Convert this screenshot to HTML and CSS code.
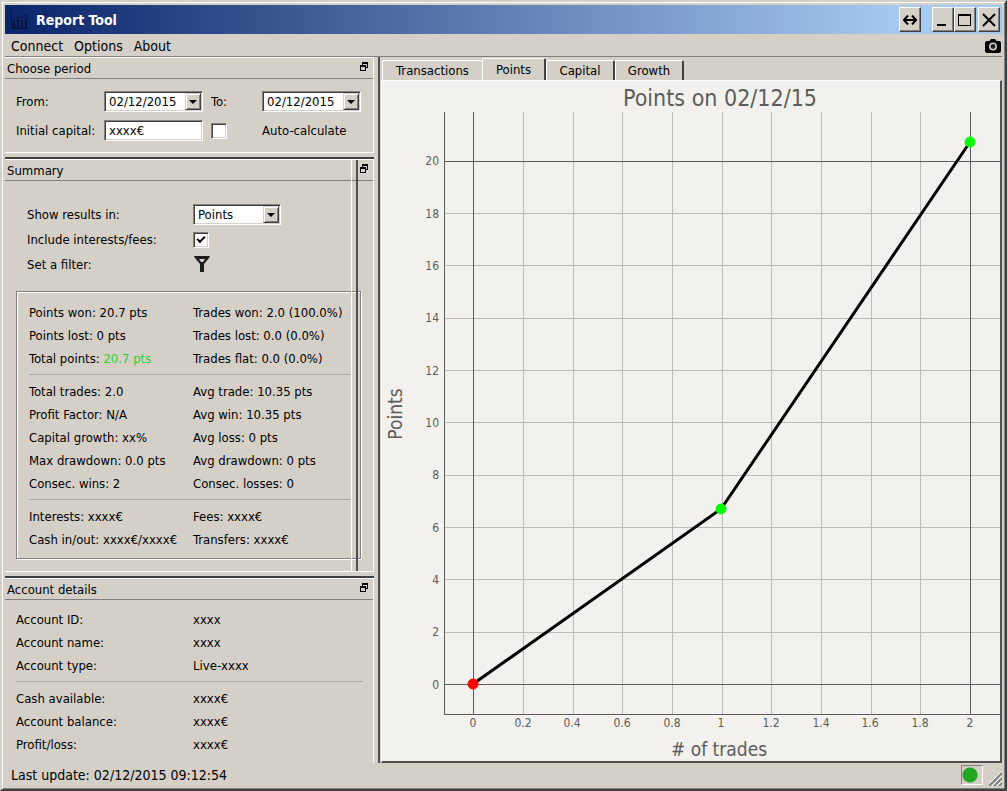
FILE: index.html
```html
<!DOCTYPE html>
<html lang="en">
<head>
  <meta charset="UTF-8" />
  <meta name="viewport" content="width=device-width, initial-scale=1.0" />
  <link rel="stylesheet" href="styles.css">
  <title>Report Tool</title>
</head>
<body>
  <div class="window">
    <!-- Title bar -->
    <header class="title-bar">
      <svg class="app-icon" width="20" height="20" viewBox="0 0 20 20" fill="none" stroke="#06133f">
        <path d="M1.500 0v18.500h18" />
        <path d="M3 12h2v6H3zM7 9h2v9H7zM11 10h2v8h-2zM15 8h2v10h-2z" fill="#06133f" stroke="none" />
        <path d="M3 11l4-4 4 1 5-3 2 2" />
      </svg>
      <h1>Report Tool</h1>
      <button class="win-btn resize-btn" aria-label="Resize">
        <svg width="14" height="10" viewBox="0 0 14 10" fill="none" stroke="#000" stroke-width="2">
          <path d="M5 0.500L1 5l4 4.500M9 0.500L13 5L9 9.500M2 5h10" />
        </svg>
      </button>
      <button class="win-btn" aria-label="Minimize">
        <svg width="14" height="14" viewBox="0 0 14 14"><path d="M1 11h9v2H1z" /></svg>
      </button>
      <button class="win-btn" aria-label="Maximize">
        <svg width="14" height="14" viewBox="0 0 14 14"><path d="M0 1h13v12H0zM1 3v9h11V3z" fill-rule="evenodd" /></svg>
      </button>
      <button class="win-btn close-btn" aria-label="Close">
        <svg width="14" height="14" viewBox="0 0 14 14" stroke="#000" stroke-width="2"><path d="M1 1l12 12M13 1L1 13" /></svg>
      </button>
    </header>

    <!-- Menu -->
    <nav class="menu-bar">
      <a href="#">Connect</a>
      <a href="#">Options</a>
      <a href="#">About</a>
      <button class="camera-btn" aria-label="Take a screenshot">
        <svg width="16" height="14" viewBox="0 0 16 14">
          <path d="M2 2h2.500L6 0h4l1.500 2H14q2 0 2 2v8q0 2-2 2H2q-2 0-2-2V4q0-2 2-2z" />
          <circle cx="8" cy="7.500" r="3.200" fill="#222" stroke="#d4d0c8" stroke-width="1.500" />
        </svg>
      </button>
    </nav>

    <main class="content">
      <!-- Docks -->
      <div class="docks">
        <section class="dock">
          <div class="dock-title">
            <h2>Choose period</h2>
            <button class="float-btn" aria-label="Float">
              <svg width="8" height="9" viewBox="0 0 8 9"><path d="M2 0h6v6H6V5h1V2H3v1H2zM0 3h6v6H0zM1 5v3h4V5z" fill-rule="evenodd" /></svg>
            </button>
          </div>
          <div class="period">
            <label for="from">From:</label>
            <div class="combo">
              <input type="text" id="from" value="02/12/2015">
              <button class="arrow" aria-label="Open calendar"></button>
            </div>
            <label for="to">To:</label>
            <div class="combo">
              <input type="text" id="to" value="02/12/2015">
              <button class="arrow" aria-label="Open calendar"></button>
            </div>
            <label for="capital">Initial capital:</label>
            <input type="text" class="text-box" id="capital" value="xxxx€">
            <input type="checkbox" id="auto">
            <label for="auto">Auto-calculate</label>
          </div>
        </section>

        <div class="splitter"></div>

        <section class="dock summary">
          <div class="dock-title">
            <h2>Summary</h2>
            <button class="float-btn" aria-label="Float">
              <svg width="8" height="9" viewBox="0 0 8 9"><path d="M2 0h6v6H6V5h1V2H3v1H2zM0 3h6v6H0zM1 5v3h4V5z" fill-rule="evenodd" /></svg>
            </button>
          </div>
          <div class="options">
            <label for="results">Show results in:</label>
            <div class="combo combo-small">
              <select id="results">
                <option>Points</option>
                <option>Euros</option>
                <option>Percent</option>
              </select>
              <span class="arrow"></span>
            </div>
            <label for="fees">Include interests/fees:</label>
            <input type="checkbox" id="fees" checked>
            <label for="filter">Set a filter:</label>
            <button class="filter-btn" id="filter">
              <svg width="17" height="16" viewBox="0 0 17 16">
                <path d="M1 0h16l-1 2-5 6v8H7V8L2 2zM6 3l2 3h2l2-3z" fill="#1c1c1c" fill-rule="evenodd" />
              </svg>
            </button>
          </div>
          <div class="stats">
            <table>
              <tr><td>Points won: 20.7 pts</td><td>Trades won: 2.0 (100.0%)</td></tr>
              <tr><td>Points lost: 0 pts</td><td>Trades lost: 0.0 (0.0%)</td></tr>
              <tr><td>Total points: <span class="gain">20.7 pts</span></td><td>Trades flat: 0.0 (0.0%)</td></tr>
            </table>
            <hr>
            <table>
              <tr><td>Total trades: 2.0</td><td>Avg trade: 10.35 pts</td></tr>
              <tr><td>Profit Factor: N/A</td><td>Avg win: 10.35 pts</td></tr>
              <tr><td>Capital growth: xx%</td><td>Avg loss: 0 pts</td></tr>
              <tr><td>Max drawdown: 0.0 pts</td><td>Avg drawdown: 0 pts</td></tr>
              <tr><td>Consec. wins: 2</td><td>Consec. losses: 0</td></tr>
            </table>
            <hr>
            <table>
              <tr><td>Interests: xxxx€</td><td>Fees: xxxx€</td></tr>
              <tr><td>Cash in/out: xxxx€/xxxx€</td><td>Transfers: xxxx€</td></tr>
            </table>
          </div>
        </section>

        <div class="splitter"></div>

        <section class="dock account">
          <div class="dock-title">
            <h2>Account details</h2>
            <button class="float-btn" aria-label="Float">
              <svg width="8" height="9" viewBox="0 0 8 9"><path d="M2 0h6v6H6V5h1V2H3v1H2zM0 3h6v6H0zM1 5v3h4V5z" fill-rule="evenodd" /></svg>
            </button>
          </div>
          <div class="details">
            <table>
              <tr><td>Account ID:</td><td>xxxx</td></tr>
              <tr><td>Account name:</td><td>xxxx</td></tr>
              <tr><td>Account type:</td><td>Live-xxxx</td></tr>
            </table>
            <hr>
            <table>
              <tr><td>Cash available:</td><td>xxxx€</td></tr>
              <tr><td>Account balance:</td><td>xxxx€</td></tr>
              <tr><td>Profit/loss:</td><td>xxxx€</td></tr>
            </table>
          </div>
        </section>
      </div>

      <!-- Tabs and chart -->
      <div class="workspace">
        <div class="tabs" role="tablist">
          <button class="tab tab-wide" role="tab">Transactions</button>
          <button class="tab active" role="tab" aria-selected="true">Points</button>
          <button class="tab" role="tab">Capital</button>
          <button class="tab" role="tab">Growth</button>
        </div>
        <div class="panel">
          <svg class="chart" viewBox="0 0 618 680">
            <text class="chart-title" x="338" y="25">Points on 02/12/15</text>
            <!-- Grid -->
            <path class="grid" d="M141 31V633M191 31V633M240 31V633M290 31V633M340 31V633M389 31V633M439 31V633M489 31V633M538 31V633" />
            <path class="grid" d="M62 551H618M62 498H618M62 446H618M62 394H618M62 341H618M62 289H618M62 237H618M62 184H618M62 132H618" />
            <path class="axis" d="M62 31V633H618M91 31V633M588 31V633M62 603H618M62 80H618" />
            <!-- Y ticks -->
            <g class="tick tick-y">
              <text x="57" y="608">0</text>
              <text x="57" y="555">2</text>
              <text x="57" y="503">4</text>
              <text x="57" y="451">6</text>
              <text x="57" y="398">8</text>
              <text x="57" y="346">10</text>
              <text x="57" y="294">12</text>
              <text x="57" y="241">14</text>
              <text x="57" y="189">16</text>
              <text x="57" y="137">18</text>
              <text x="57" y="84">20</text>
            </g>
            <!-- X ticks -->
            <g class="tick tick-x">
              <text x="91" y="646">0</text>
              <text x="141" y="646">0.2</text>
              <text x="190" y="646">0.4</text>
              <text x="240" y="646">0.6</text>
              <text x="290" y="646">0.8</text>
              <text x="339" y="646">1</text>
              <text x="389" y="646">1.2</text>
              <text x="439" y="646">1.4</text>
              <text x="488" y="646">1.6</text>
              <text x="538" y="646">1.8</text>
              <text x="588" y="646">2</text>
            </g>
            <text class="axis-label" x="337" y="675"># of trades</text>
            <text class="axis-label" transform="translate(20 333) rotate(-90)">Points</text>
            <!-- Data -->
            <path class="curve" d="M91 603L339 428L588 61" />
            <circle cx="91" cy="603" r="5" fill="#f00" stroke="#f00" />
            <circle cx="339" cy="428" r="5" fill="#0f0" stroke="#0f0" />
            <circle cx="588" cy="61" r="5" fill="#0f0" stroke="#0f0" />
          </svg>
        </div>
      </div>
    </main>

    <!-- Status bar -->
    <footer class="status-bar">
      <span>Last update: 02/12/2015 09:12:54</span>
      <span class="status-light"></span>
      <svg class="grip" width="13" height="13" viewBox="0 0 13 13" stroke="#808080" stroke-width="2">
        <path d="M0 13L13 0M5 13L13 5M10 13l3-3" />
        <path d="M-1 12L12-1M3 13L13 3M8 13l5-5" stroke="#fff" stroke-width="1" />
      </svg>
    </footer>
  </div>
</body>
</html>
```
FILE: styles.css
```css
* {
  margin: 0;
  padding: 0;
  box-sizing: border-box;
}

body {
  font-family: "DejaVu Sans Condensed", "DejaVu Sans", sans-serif;
  font-size: 13px;
  color: #000;
  background: #d4d0c8;
}

button, input, select {
  font: inherit;
  color: inherit;
}

button {
  background: none;
  border: none;
}

svg {
  display: block;
}

/* Window frame */
.window {
  display: flex;
  flex-direction: column;
  min-height: 100vh;
  padding: 3px;
  border: 2px solid;
  border-color: #d4d0c8 #404040 #404040 #d4d0c8;
  box-shadow: inset 1px 1px #fff, inset -1px -1px #808080;
}

/* Title bar */
.title-bar {
  display: flex;
  align-items: center;
  height: 29px;
  padding: 0 2px 0 5px;
  background: linear-gradient(to right, #0a246a, #a6caf0 90%);
}

.title-bar h1 {
  flex: 1;
  margin-left: 6px;
  font-size: 14px;
  color: #fff;
}

.win-btn {
  display: flex;
  align-items: center;
  justify-content: center;
  width: 22px;
  height: 25px;
  background: #d4d0c8;
  border: 1px solid;
  border-color: #fff #404040 #404040 #fff;
  box-shadow: inset -1px -1px #808080;
}

.resize-btn {
  margin-right: 11px;
}

.close-btn {
  margin-left: 2px;
}

/* Menu */
.menu-bar {
  display: flex;
  align-items: center;
  gap: 11px;
  height: 23px;
  padding: 1px 1px 0 6px;
  font-size: 14px;
  border-bottom: 1px solid #808080;
}

.menu-bar a {
  color: #000;
  text-decoration: none;
}

.camera-btn {
  margin-left: auto;
}

/* Content */
.content {
  flex: 1;
  display: flex;
}

.docks {
  display: flex;
  flex-direction: column;
  width: 369px;
  margin-right: 4px;
}

.dock {
  position: relative;
  border: 1px solid #fff;
  border-left: none;
}

.account {
  flex: 1;
  border-bottom: none;
}

.splitter {
  height: 6px;
  border-bottom: 2px solid #404040;
}

.dock-title {
  display: flex;
  justify-content: space-between;
  height: 21px;
  padding: 0 5px 0 2px;
  border-bottom: 1px solid #808080;
}

.dock-title h2 {
  font-size: 13px;
  font-weight: normal;
  line-height: 21px;
}

.float-btn {
  height: 17px;
}

/* Choose period */
.period {
  display: grid;
  grid-template-columns: 88px 107px 51px 99px;
  grid-auto-rows: 29px;
  align-items: center;
  padding: 8px 11px 7px;
}

.combo {
  position: relative;
  display: flex;
  width: 99px;
  height: 21px;
}

.combo-small {
  width: 88px;
}

.combo, .text-box, input[type="checkbox"] {
  background: #fff;
  border: 1px solid;
  border-color: #808080 #fff #fff #808080;
  box-shadow: inset 1px 1px #404040, inset -1px -1px #d4d0c8;
}

.combo input, .combo select {
  flex: 1;
  width: 100%;
  padding-left: 4px;
  background: none;
  border: none;
  outline: none;
  appearance: none;
}

.text-box {
  width: 99px;
  height: 21px;
  padding-left: 4px;
}

.arrow {
  position: absolute;
  top: 1px;
  right: 1px;
  width: 16px;
  height: 17px;
  background: #d4d0c8;
  border: 1px solid;
  border-color: #d4d0c8 #404040 #404040 #d4d0c8;
  box-shadow: inset 1px 1px #fff, inset -1px -1px #808080;
  pointer-events: none;
}

.arrow::after {
  content: "";
  position: absolute;
  top: 6px;
  left: 3px;
  border: 4px solid transparent;
  border-top-color: #000;
  border-bottom: none;
}

input[type="checkbox"] {
  position: relative;
  width: 16px;
  height: 16px;
  appearance: none;
}

input[type="checkbox"]:checked::after {
  content: "";
  position: absolute;
  top: 3px;
  left: 3px;
  width: 6px;
  height: 3px;
  border: solid #000;
  border-width: 0 0 2px 2px;
  transform: rotate(-45deg);
}

/* Summary */
.options {
  display: grid;
  grid-template-columns: 166px 88px;
  grid-template-rows: 26px 25px 24px;
  align-items: center;
  padding: 20px 22px 15px;
}

.summary::after {
  content: "";
  position: absolute;
  top: 0;
  bottom: 0;
  right: 15px;
  width: 4px;
  border-left: 1px solid #fff;
  border-right: 2px solid #505050;
}

.stats {
  margin: 0 12px 12px 11px;
  padding: 9px 10px 7px 12px;
  border: 1px solid #808080;
  box-shadow: 1px 1px #fff, inset 1px 1px #fff;
}

table {
  border-collapse: collapse;
}

td {
  height: 23px;
  white-space: nowrap;
}

.stats td:first-child {
  width: 164px;
}

.gain {
  color: #32cd32;
}

hr {
  height: 1px;
  margin: 4px 0 5px;
  background: #aca8a3;
  border: none;
}

/* Account details */
.details {
  padding: 8px 10px 6px 11px;
}

.details td:first-child {
  width: 177px;
}

/* Tabs */
.workspace {
  flex: 1;
  display: flex;
  flex-direction: column;
  min-width: 0;
  padding-left: 1px;
  border-left: 2px solid #505050;
}

.tabs {
  display: flex;
  align-items: flex-end;
  height: 23px;
  padding-left: 1px;
}

.tab {
  width: 69px;
  height: 20px;
  border: 1px solid #fff;
  border-right: 2px solid #404040;
  border-bottom: none;
  border-radius: 2px 2px 0 0;
}

.tab-wide {
  width: 100px;
  border-right: none;
}

.tab.active {
  width: 64px;
  height: 22px;
  padding-bottom: 1px;
}

.panel {
  flex: 1;
  background: #f2f1ed;
  border: 1px solid #fff;
  border-right: 2px solid #505050;
  border-bottom: 2px solid #505050;
}

/* Chart */
.chart {
  width: 100%;
  height: 100%;
}

.grid, .axis {
  fill: none;
  shape-rendering: crispEdges;
}

.grid {
  stroke: #bcbbb8;
}

.axis {
  stroke: #5c5c5a;
}

.curve {
  fill: none;
  stroke: #000;
  stroke-width: 3px;
}

.chart text {
  fill: #5c5c5c;
}

.chart-title {
  font-size: 23px;
  text-anchor: middle;
}

.axis-label {
  font-size: 19px;
  text-anchor: middle;
}

.tick {
  font-size: 12px;
}

.tick-x {
  text-anchor: middle;
}

.tick-y {
  text-anchor: end;
}

/* Status bar */
.status-bar {
  display: flex;
  align-items: center;
  height: 23px;
  padding-left: 6px;
  font-size: 14px;
}

.status-light {
  width: 22px;
  height: 20px;
  margin-left: auto;
  margin-right: 6px;
  border: 1px solid;
  border-color: #808080 #fff #fff #808080;
  background: radial-gradient(circle at 8px 9px, #22a722 7px, transparent 8px);
}

.grip {
  align-self: flex-end;
}
```
